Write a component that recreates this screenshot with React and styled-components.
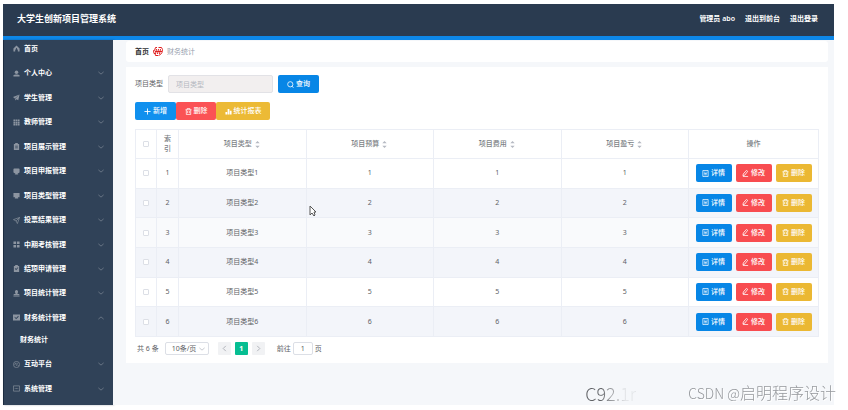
import React from 'react'
import styled, { createGlobalStyle } from 'styled-components'

const menu = [
    { icon: 'user', text: '个人中心' },
    { icon: 'plane', text: '学生管理' },
    { icon: 'grid', text: '教师管理' },
    { icon: 'clip', text: '项目展示管理' },
    { icon: 'round', text: '项目申报管理' },
    { icon: 'monitor', text: '项目类型管理' },
    { icon: 'send', text: '投票结果管理' },
    { icon: 'blocks', text: '中期考核管理' },
    { icon: 'clipCheck', text: '结项申请管理' },
    { icon: 'stamp', text: '项目统计管理' },
    { icon: 'check', text: '财务统计管理', children: ['财务统计'] },
    { icon: 'gauge', text: '互动平台' },
    { icon: 'chat', text: '系统管理' },
]

const rows = [1, 2, 3, 4, 5, 6]

const icons = {
    home: <path d="M8 1 1 8v7h4v-5h2V7h2v3h2v5h4V8z" fill="currentColor" />,
    user: (
        <g fill="currentColor">
            <circle cx="8" cy="5" r="4" />
            <path d="M1 15v-3q2-2 5-2h4q3 0 5 2v3z" />
        </g>
    ),
    plane: <path d="M15 1 0 7l4 3zM15 1 5 11v4l3-3 4 2z" fill="currentColor" />,
    grid: (
        <path
            d="M1 1h4v4H1zM6 1h4v4H6zM11 1h4v4h-4zM1 6h4v4H1zM6 6h4v4H6zM11 6h4v4h-4zM1 11h4v4H1zM6 11h4v4H6zM11 11h4v4h-4z"
            fill="currentColor"
        />
    ),
    clip: <path d="M2 2h3V0h6v2h3v14H2zM5 6v2h6V6zM5 10v2h6v-2z" fill="currentColor" fillRule="evenodd" />,
    round: <path d="M3 1h10q2 0 2 2v6q0 3-4 3v2h1v1H4v-1h1v-2q-4 0-4-3V3q0-2 2-2z" fill="currentColor" />,
    monitor: <path d="M1 2h14v10H11l1 2v1H4v-1l1-2H1z" fill="currentColor" />,
    send: <path d="M15 1 1 6l6 3 3 6zM15 1 7 9" fill="none" stroke="currentColor" strokeWidth="1.5" />,
    blocks: <path d="M1 1h6v6H1zM9 1h6v6H9zM1 9h6v6H1zM9 9h6v6H9z" fill="currentColor" />,
    clipCheck: (
        <path
            d="M2 2h3V0h6v2h3v14H2zM4 8l3 4 5-6-1-1-4 4-2-2z"
            fill="currentColor"
            fillRule="evenodd"
        />
    ),
    stamp: <path d="M8 0a4 4 0 0 1 3 6l-1 3h4l1 3H1l1-3h4L5 6a4 4 0 0 1 3-6zM1 13h14v2H1z" fill="currentColor" />,
    check: <path d="M0 1h16v14H0zM3 7l4 5 6-6-1-2-5 5-3-3z" fill="currentColor" fillRule="evenodd" />,
    gauge: (
        <g fill="none" stroke="currentColor" strokeWidth="1.5">
            <circle cx="8" cy="8" r="7" />
            <path d="M8 11 10 5M4 9q0-4 4-4M12 9v2" />
        </g>
    ),
    chat: <path d="M1 2h14v12H1zM4 8h2M7 8h2M10 8h2" fill="none" stroke="currentColor" strokeWidth="1.5" />,
    down: <path d="m1 5 7 6 7-6" fill="none" stroke="currentColor" strokeWidth="2" />,
    up: <path d="m1 11 7-6 7 6" fill="none" stroke="currentColor" strokeWidth="2" />,
    left: <path d="m11 2-6 6 6 6" fill="none" stroke="currentColor" strokeWidth="2" />,
    right: <path d="m5 2 6 6-6 6" fill="none" stroke="currentColor" strokeWidth="2" />,
    search: (
        <g fill="none" stroke="currentColor" strokeWidth="1.8">
            <circle cx="7.5" cy="7.5" r="6" />
            <path d="m11 12 4 3" />
        </g>
    ),
    plus: <path d="M8 1v14M1 8h14" fill="none" stroke="currentColor" strokeWidth="2" />,
    trash: (
        <path
            d="M1 4h14M5 4V1h6v3M3 4v11h10V4M6 7v5M10 7v5"
            fill="none"
            stroke="currentColor"
            strokeWidth="1.7"
        />
    ),
    bars: <path d="M1 9h4v6H1zM6 2h4v13H6zM11 6h4v9h-4z" fill="currentColor" />,
    doc: (
        <path
            d="M2 1h12v14H2zM5 5h3M5 8h6M5 11h6M11 4v2"
            fill="none"
            stroke="currentColor"
            strokeWidth="1.7"
        />
    ),
    edit: (
        <path d="m10 1 3 2-7 9-4 1 1-4zM2 15h12" fill="none" stroke="currentColor" strokeWidth="1.8" />
    ),
    sort: <path d="m8 0 5 5H3zM8 16l5-5H3z" fill="currentColor" />,
}

const Icon = ({ name, size = 7 }) => (
    <Svg viewBox="0 0 16 16" width={size} height={size} aria-hidden="true">
        {icons[name]}
    </Svg>
)

const App = () => {
    return (
        <>
            <GlobalStyle />
            <Frame>
                <Header>
                    <Title>大学生创新项目管理系统</Title>
                    <HeaderLinks>
                        <span>管理员 abo</span>
                        <HeaderLink href="#front">退出到前台</HeaderLink>
                        <HeaderLink href="#logout">退出登录</HeaderLink>
                    </HeaderLinks>
                </Header>
                <Body>
                    <Sidebar>
                        <HomeItem href="#home">
                            <Icon name="home" />
                            首页
                        </HomeItem>
                        {menu.map((item) => (
                            <React.Fragment key={item.text}>
                                <MenuItem type="button" aria-expanded={!!item.children}>
                                    <Icon name={item.icon} />
                                    <MenuText>{item.text}</MenuText>
                                    <Arrow>
                                        <Icon name={item.children ? 'up' : 'down'} size={6} />
                                    </Arrow>
                                </MenuItem>
                                {item.children?.map((child) => (
                                    <SubItem key={child} href="#finance">
                                        {child}
                                    </SubItem>
                                ))}
                            </React.Fragment>
                        ))}
                    </Sidebar>
                    <Main>
                        <Breadcrumb>
                            <Crumb href="#home">首页</Crumb>
                            <Svg viewBox="0 0 20 18" width="10" height="9" aria-hidden="true">
                                <g fill="none" stroke="#e02020" strokeWidth="2">
                                    <path d="M8 1H5L3 7H1l1 6h2l1 4h5M7 4 5 14M11 4 9 14M15 4l-2 10M11 1h6l2 4-1 6-3 4-4 2M4 9h14" />
                                </g>
                            </Svg>
                            <span>财务统计</span>
                        </Breadcrumb>
                        <Card>
                            <SearchRow>
                                <label htmlFor="type">项目类型</label>
                                <SearchInput id="type" placeholder="项目类型" />
                                <Button $color="#0786e6" $width={41}>
                                    <Icon name="search" />
                                    查询
                                </Button>
                            </SearchRow>
                            <Actions>
                                <Button $color="#1090ee" $width={41}>
                                    <Icon name="plus" />
                                    新增
                                </Button>
                                <Button $color="#fb5255" $width={40}>
                                    <Icon name="trash" />
                                    删除
                                </Button>
                                <Button $color="#ecba36" $width={54}>
                                    <Icon name="bars" />
                                    统计报表
                                </Button>
                            </Actions>
                            <Table>
                                <colgroup>
                                    <col width="21" />
                                    <col width="22" />
                                    <col />
                                    <col />
                                    <col />
                                    <col />
                                    <col width="130" />
                                </colgroup>
                                <thead>
                                    <tr>
                                        <Th>
                                            <Checkbox aria-label="全选" />
                                        </Th>
                                        <Th>索引</Th>
                                        {['项目类型', '项目预算', '项目费用', '项目盈亏'].map((name) => (
                                            <Th key={name}>
                                                {name} <Sort><Icon name="sort" /></Sort>
                                            </Th>
                                        ))}
                                        <Th>操作</Th>
                                    </tr>
                                </thead>
                                <tbody>
                                    {rows.map((n) => (
                                        <Row key={n} $hover={n === 3}>
                                            <Td>
                                                <Checkbox aria-label={`选择 ${n}`} />
                                            </Td>
                                            <Td>{n}</Td>
                                            <Td>项目类型{n}</Td>
                                            <Td>{n}</Td>
                                            <Td>{n}</Td>
                                            <Td>{n}</Td>
                                            <Td>
                                                <RowButtons>
                                                    <Button $color="#0786e6" $width={36}>
                                                        <Icon name="doc" />
                                                        详情
                                                    </Button>
                                                    <Button $color="#f84c50" $width={36}>
                                                        <Icon name="edit" />
                                                        修改
                                                    </Button>
                                                    <Button $color="#ebb833" $width={36}>
                                                        <Icon name="trash" />
                                                        删除
                                                    </Button>
                                                </RowButtons>
                                            </Td>
                                        </Row>
                                    ))}
                                </tbody>
                            </Table>
                            <Pagination>
                                <span>共 6 条</span>
                                <SelectBox>
                                    <PageSize aria-label="每页条数" defaultValue="10">
                                        <option value="10">10条/页</option>
                                        <option value="20">20条/页</option>
                                    </PageSize>
                                    <Icon name="down" size={6} />
                                </SelectBox>
                                <Pager>
                                    <PageButton aria-label="上一页" disabled>
                                        <Icon name="left" />
                                    </PageButton>
                                    <PageButton $active>1</PageButton>
                                    <PageButton aria-label="下一页" disabled>
                                        <Icon name="right" />
                                    </PageButton>
                                </Pager>
                                <Jump>
                                    前往
                                    <JumpInput defaultValue="1" />
                                    页
                                </Jump>
                            </Pagination>
                        </Card>
                    </Main>
                </Body>
            </Frame>
            <Watermarks>
                <Faded>C92.1r</Faded>
                <Watermark>
                    <Latin>CSDN @</Latin>启明程序设计
                </Watermark>
            </Watermarks>
            <Cursor viewBox="0 0 8 12" width="8" height="12" aria-hidden="true">
                <path d="M1 1v9l2-2 2 3 1-1-1-3h2z" fill="#fff" stroke="#555" />
            </Cursor>
        </>
    )
}

export default App

const GlobalStyle = createGlobalStyle`
    * {
        box-sizing: border-box;
    }
    body {
        margin: 0;
        background: #fff;
        color: #606266;
        font: 7px/10px "Noto Sans", "Noto Sans CJK SC", sans-serif;
    }
    button, input, select {
        font: inherit;
        color: inherit;
        margin: 0;
        padding: 0;
    }
    a {
        color: inherit;
        text-decoration: none;
    }
`;

const Svg = styled.svg`
    display: block;
    flex: none;
`;

const Frame = styled.div`
    display: flex;
    flex-direction: column;
    min-height: calc(100vh - 9px);
    margin: 4px 14px 5px 3px;
`;

const Header = styled.header`
    display: flex;
    align-items: center;
    justify-content: space-between;
    height: 36px;
    padding: 0 16px 2px 14px;
    background: #2a3b50;
    border-bottom: 4px solid #0d87e8;
    color: #fff;
`;

const Title = styled.h1`
    margin: 0;
    font-size: 9px;
    line-height: 12px;
    font-weight: 700;
`;

const HeaderLinks = styled.nav`
    display: flex;
    gap: 10px;
    font-weight: 600;
`;

const HeaderLink = styled.a`
    color: #fff;
`;

const Body = styled.div`
    display: flex;
    flex: 1;
`;

const Sidebar = styled.nav`
    display: flex;
    flex-direction: column;
    flex: none;
    width: 110px;
    padding-bottom: 4px;
    background: #304258;
    border-left: 1px solid #1c2b40;
    box-shadow: 1px 0 2px rgba(0, 21, 41, 0.3);
    color: #fff;
    font-weight: 700;

    svg {
        color: #8c95a1;
    }
`;

const HomeItem = styled.a`
    display: flex;
    align-items: center;
    gap: 4px;
    height: 21px;
    padding: 0 9px 4px;
`;

const MenuItem = styled.button`
    display: flex;
    flex: 1;
    align-items: center;
    gap: 4px;
    padding: 0 9px;
    border: 0;
    background: none;
    text-align: left;
`;

const MenuText = styled.span`
    flex: 1;
`;

const Arrow = styled.span`
    opacity: 0.8;
`;

const SubItem = styled.a`
    height: 22px;
    padding: 5px 16px;
`;

const Main = styled.main`
    flex: 1;
    min-width: 0;
    padding: 1px 6px 0 13px;
    background: #f5f7fa;
`;

const Breadcrumb = styled.nav`
    display: flex;
    align-items: center;
    gap: 4px;
    height: 21px;
    padding: 0 9px;
    border-radius: 3px;
    background: #fff;
    color: #97a0ae;
`;

const Crumb = styled.a`
    color: #303133;
    font-weight: 700;
`;

const Card = styled.section`
    margin-top: 5px;
    padding: 8px 9px;
    background: #fff;
`;

const SearchRow = styled.div`
    display: flex;
    align-items: center;
    gap: 5px;
`;

const SearchInput = styled.input`
    width: 105px;
    height: 18px;
    padding: 0 7px;
    border: 1px solid #e2e2e6;
    border-radius: 2px;
    background: #f2efef;

    &::placeholder {
        color: #b4b8c0;
        opacity: 1;
    }
`;

const Button = styled.button`
    display: flex;
    align-items: center;
    justify-content: center;
    gap: 2px;
    width: ${(props) => props.$width}px;
    height: 18px;
    border: 0;
    border-radius: 2px;
    background: ${(props) => props.$color};
    color: #fff;
    font-weight: 500;
`;

const Actions = styled.div`
    display: flex;
    margin: 9px 0;
`;

const Table = styled.table`
    width: 100%;
    height: 208px;
    table-layout: fixed;
    border-collapse: collapse;
    text-align: center;
`;

const Th = styled.th`
    height: 29px;
    padding: 0 5px;
    border: 1px solid #ebeef5;
    color: #7c7f85;
    font-weight: 500;
`;

const Td = styled.td`
    padding: 0;
    border: 1px solid #ebeef5;
`;

const Row = styled.tr`
    background: ${(props) => (props.$hover ? '#f9fafc' : '#fff')};

    &:nth-child(even) {
        background: #f3f5fa;
    }
`;

const Sort = styled.span`
    display: inline-block;
    vertical-align: middle;
    color: #b5b9c2;
`;

const Checkbox = styled.input.attrs({ type: 'checkbox' })`
    display: block;
    appearance: none;
    width: 6px;
    height: 6px;
    margin: 0 auto;
    border: 1px solid #dcdfe6;
    border-radius: 1px;
    background: #fff;
`;

const RowButtons = styled.div`
    display: flex;
    justify-content: center;
    gap: 4px;
`;

const Pagination = styled.div`
    display: flex;
    align-items: center;
    margin-top: 5px;
    padding-left: 2px;
`;

const SelectBox = styled.div`
    display: flex;
    align-items: center;
    width: 44px;
    height: 13px;
    margin: 0 9px 0 6px;
    padding-right: 3px;
    border: 1px solid #dcdfe6;
    border-radius: 2px;
    color: #b5b9c2;
`;

const PageSize = styled.select`
    flex: 1;
    min-width: 0;
    appearance: none;
    padding-left: 6px;
    border: 0;
    background: none;
    color: #606266;
`;

const Pager = styled.div`
    display: flex;
    gap: 4px;
`;

const PageButton = styled.button`
    display: flex;
    align-items: center;
    justify-content: center;
    width: 13px;
    height: 13px;
    border: 0;
    border-radius: 1px;
    background: ${(props) => (props.$active ? '#06be92' : '#f1f2f4')};
    color: ${(props) => (props.$active ? '#fff' : '#a8abb2')};
    font-weight: 700;
`;

const Jump = styled.label`
    display: flex;
    align-items: center;
    gap: 2px;
    margin-left: 12px;
`;

const JumpInput = styled.input`
    width: 20px;
    height: 13px;
    border: 1px solid #dcdfe6;
    border-radius: 2px;
    text-align: center;
`;

/* stamped over the bottom right corner of the page */
const Watermarks = styled.div`
    position: fixed;
    right: 12px;
    bottom: 6px;
    display: flex;
    align-items: center;
    gap: 52px;
    line-height: 22px;
    pointer-events: none;
`;

const Faded = styled.span`
    background: linear-gradient(90deg, #606266 30%, #e4e6e9 80%);
    background-clip: text;
    color: transparent;
    font-family: "Noto Sans CJK SC", sans-serif;
    font-size: 18px;
    font-weight: 300;
`;

const Watermark = styled.span`
    color: #96999d;
    font-family: "Noto Sans CJK SC", sans-serif;
    font-size: 16px;
    font-weight: 300;
    text-shadow: 1px 1px 0 #fff;
`;

const Latin = styled.span`
    font-size: 14px;
`;

const Cursor = styled.svg`
    position: absolute;
    left: 309px;
    top: 205px;
    pointer-events: none;
`;
